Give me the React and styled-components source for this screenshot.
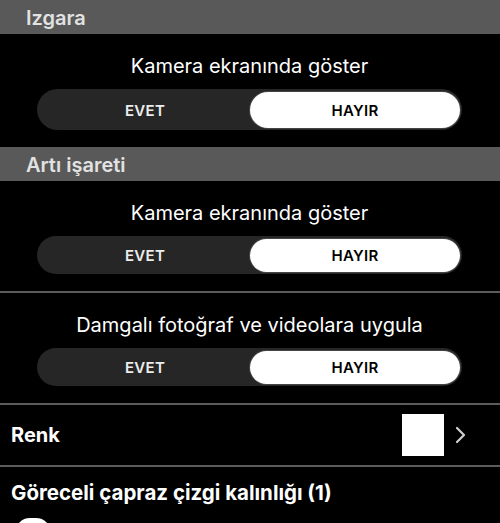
import React from "react";
import styled, { createGlobalStyle } from "styled-components";

const Global = createGlobalStyle`
  html, body { margin: 0; padding: 0; background: #000; }
  body { font-family: Inter, "Noto Sans", "DejaVu Sans", sans-serif; -webkit-font-smoothing: antialiased; }
`;

const Page = styled.div`
  width: 500px;
  height: 523px;
  overflow: hidden;
  background: #000;
  color: #fff;
`;

const SectionHeader = styled.div`
  height: 34px;
  background: #595959;
  color: #e2e2e2;
  font-size: 20px;
  font-weight: 600;
  display: flex;
  align-items: center;
  padding-left: 26px;
  padding-top: 1px;
  box-sizing: border-box;
`;

const ToggleBlock = styled.div`
  padding: 20px 38px 17px 37px;
  display: flex;
  flex-direction: column;
  align-items: stretch;
  border-bottom: ${(p) => (p.$divider ? "2px solid #5c5c5c" : "none")};
  height: ${(p) => (p.$divider ? "112px" : "113px")};
  box-sizing: border-box;
`;

const BlockLabel = styled.div`
  text-align: center;
  font-size: 20px;
  line-height: 24px;
  color: #fff;
  margin-bottom: 11px;
`;

const Track = styled.div`
  height: 41px;
  border-radius: 21px;
  background: #262626;
  display: grid;
  grid-template-columns: 1fr 1fr;
  padding: 3px 2px 2px 3px;
  box-sizing: border-box;
`;

const Segment = styled.div`
  border-radius: 18px;
  display: flex;
  align-items: center;
  justify-content: center;
  font-size: 15px;
  font-weight: 600;
  letter-spacing: 0.3px;
  color: ${(p) => (p.$active ? "#000" : "#ededed")};
  background: ${(p) => (p.$active ? "#fff" : "transparent")};
  box-shadow: ${(p) => (p.$active ? "0 0 0 1px #444" : "none")};
`;

const Row = styled.div`
  height: 62px;
  box-sizing: border-box;
  display: flex;
  align-items: center;
  justify-content: space-between;
  padding: 0 32px 0 11px;
  border-bottom: 2px solid #5c5c5c;
`;

const RowTitle = styled.div`
  font-size: ${(p) => p.$size || "20px"};
  font-weight: 700;
  color: #fff;
`;

const RowRight = styled.div`
  display: flex;
  align-items: center;
  gap: 10px;
`;

const Swatch = styled.div`
  width: 42px;
  height: 42px;
  background: ${(p) => p.$color};
`;

const Stepper = styled.div`
  padding: 13px 11px 0;
  display: flex;
  flex-direction: column;
  gap: 13px;
`;

const Thumb = styled.div`
  width: 36px;
  height: 30px;
  border-radius: 15px;
  background: #fff;
  margin-left: 4px;
`;

function Toggle({ label, value, divider }) {
  return (
    <ToggleBlock $divider={divider}>
      <BlockLabel>{label}</BlockLabel>
      <Track>
        <Segment $active={value === "EVET"}>EVET</Segment>
        <Segment $active={value === "HAYIR"}>HAYIR</Segment>
      </Track>
    </ToggleBlock>
  );
}

export default function App() {
  return (
    <Page>
      <Global />
      <SectionHeader>Izgara</SectionHeader>
      <Toggle label="Kamera ekranında göster" value="HAYIR" />
      <SectionHeader>Artı işareti</SectionHeader>
      <Toggle label="Kamera ekranında göster" value="HAYIR" divider />
      <Toggle label="Damgalı fotoğraf ve videolara uygula" value="HAYIR" divider />
      <Row>
        <RowTitle>Renk</RowTitle>
        <RowRight>
          <Swatch $color="#fff" />
          <svg width="14" height="20" viewBox="0 0 14 20">
            <path d="M3 3 L10 10 L3 17" fill="none" stroke="#cfcfcf" strokeWidth="2.2" strokeLinecap="round" strokeLinejoin="round" />
          </svg>
        </RowRight>
      </Row>
      <Stepper>
        <RowTitle $size="20.5px">Göreceli çapraz çizgi kalınlığı (1)</RowTitle>
        <Thumb />
      </Stepper>
    </Page>
  );
}
